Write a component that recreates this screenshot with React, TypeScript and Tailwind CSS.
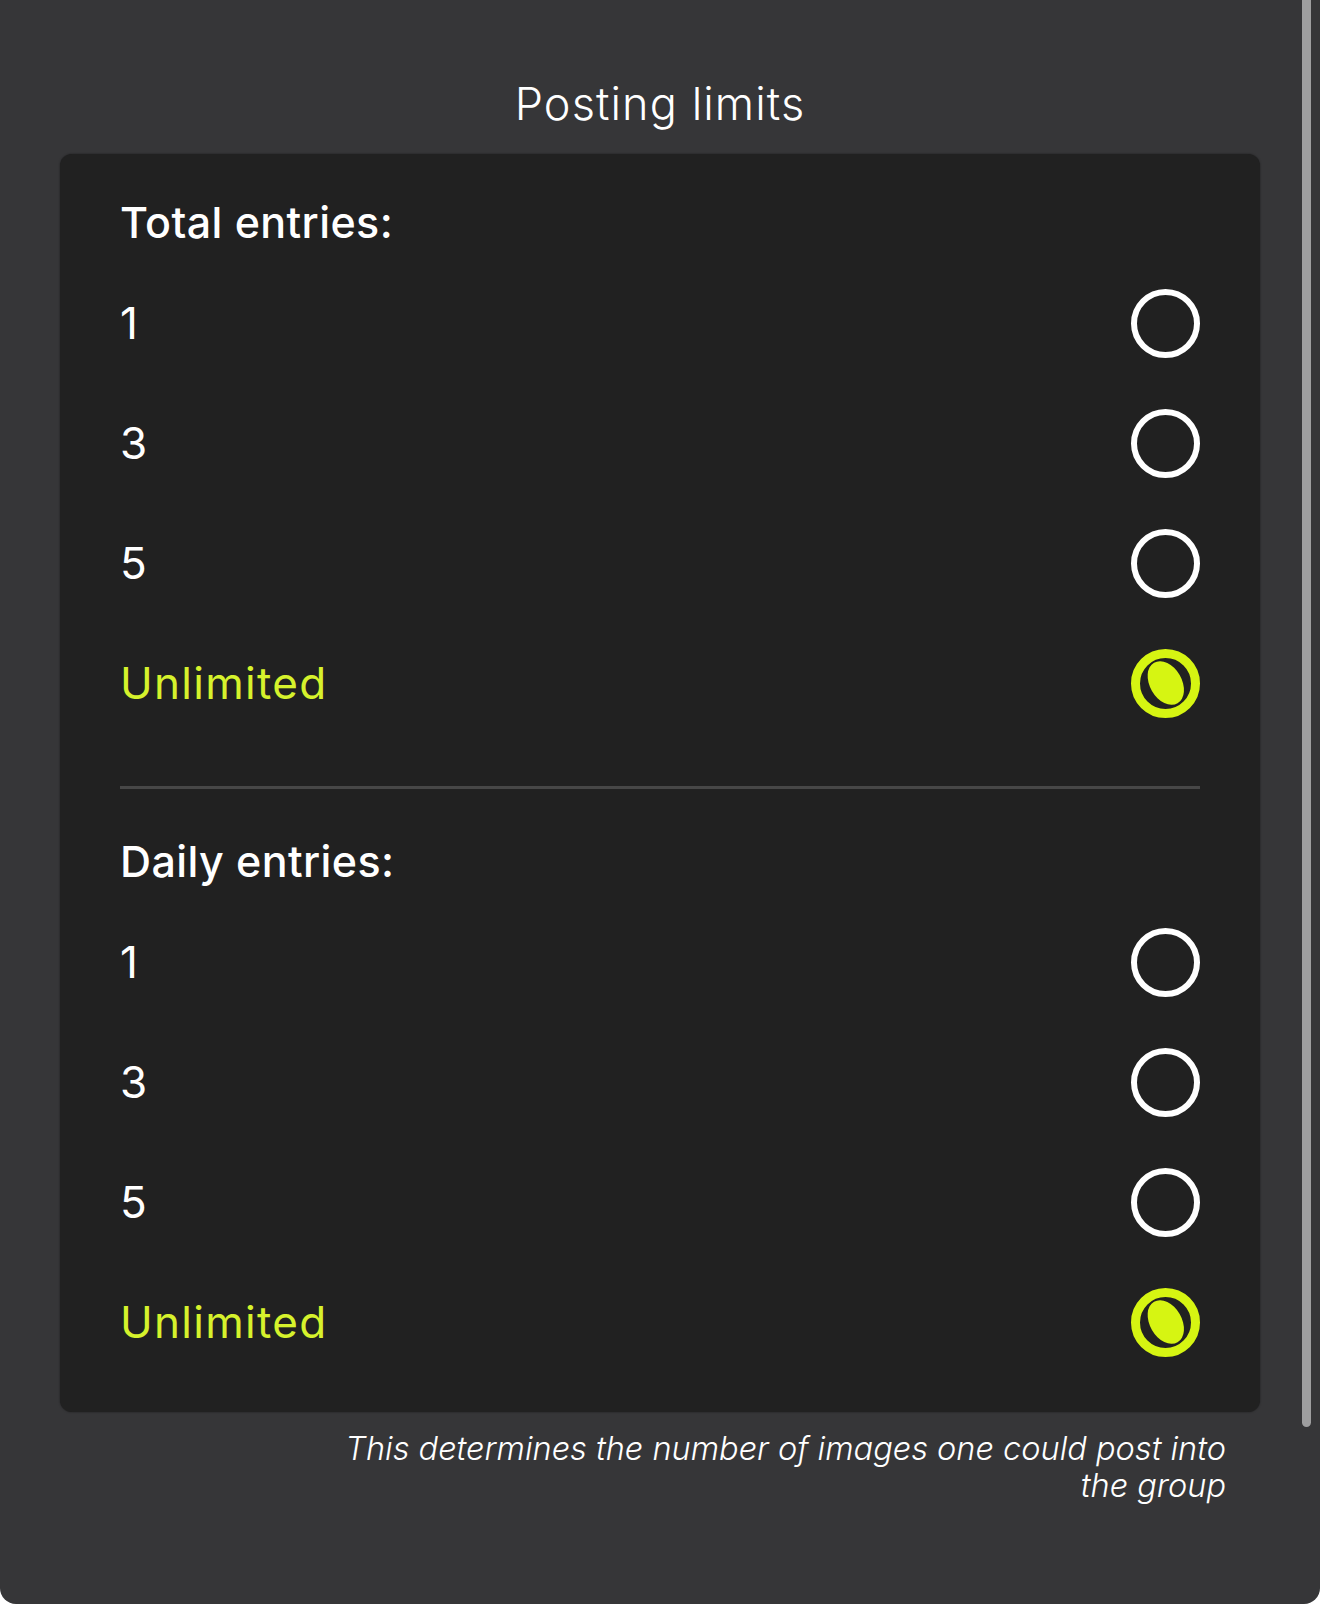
import React from "react";

type Option = { label: string; selected?: boolean };

const totalOptions: Option[] = [
  { label: "1" },
  { label: "3" },
  { label: "5" },
  { label: "Unlimited", selected: true },
];

const dailyOptions: Option[] = [
  { label: "1" },
  { label: "3" },
  { label: "5" },
  { label: "Unlimited", selected: true },
];

function Radio({ selected }: { selected?: boolean }) {
  if (selected) {
    return (
      <svg width="69" height="69" viewBox="0 0 69 69" className="shrink-0">
        <circle cx="34.5" cy="34.5" r="30" fill="none" stroke="#d6f512" strokeWidth="9" />
        <ellipse
          cx="34.8"
          cy="34"
          rx="16"
          ry="23.5"
          fill="#d6f512"
          transform="rotate(-30 34.8 34)"
        />
      </svg>
    );
  }
  return <div className="w-[69px] h-[69px] shrink-0 rounded-full border-[6px] border-white" />;
}

function OptionRow({ option }: { option: Option }) {
  return (
    <div className="flex h-[120px] items-center justify-between">
      <span
        className={
          "text-[44px] leading-[50px] font-normal tracking-[1.3px] " +
          (option.selected ? "text-[#d6f22c]" : "text-white")
        }
      >
        {option.label}
      </span>
      <Radio selected={option.selected} />
    </div>
  );
}

function Section({ title, options }: { title: string; options: Option[] }) {
  return (
    <div className="flex flex-col">
      <h2 className="text-[43px] leading-[50px] font-medium tracking-[0.4px] text-white">{title}</h2>
      <div className="mt-4 flex flex-col">
        {options.map((o, i) => (
          <OptionRow key={i} option={o} />
        ))}
      </div>
    </div>
  );
}

export default function App() {
  return (
    <div className="bg-white">
      <div
        className="relative h-[1604px] w-[1320px] overflow-hidden rounded-b-[16px] bg-[#363638]"
        style={{ fontFamily: "Inter, 'Noto Sans', sans-serif" }}
      >
        <div className="flex flex-col pt-[78px]">
          <h1 className="text-center text-[45px] leading-[52px] font-light tracking-[1.1px] text-white">
            Posting limits
          </h1>

          <div className="mx-[60px] mt-6 rounded-[12px] bg-[#212121] px-[60px] pt-[43px] pb-[30px] shadow-[0_0_2px_rgba(0,0,0,0.5)]">
            <Section title="Total entries:" options={totalOptions} />
            <div className="mt-[43px] mb-[47px] h-[3px] bg-[#474747]" />
            <Section title="Daily entries:" options={dailyOptions} />
          </div>

          <div className="mt-[18px] flex justify-end pr-[94px]">
            <p className="w-[910px] text-right text-[32.5px] leading-[37px] font-light italic text-white">
              This determines the number of images one could post into the group
            </p>
          </div>
        </div>

        {/* scrollbar thumb */}
        <div className="absolute right-[9px] top-0 h-[1427px] w-[9px] rounded-b-full bg-[#9e9e9f]" />
      </div>
    </div>
  );
}
